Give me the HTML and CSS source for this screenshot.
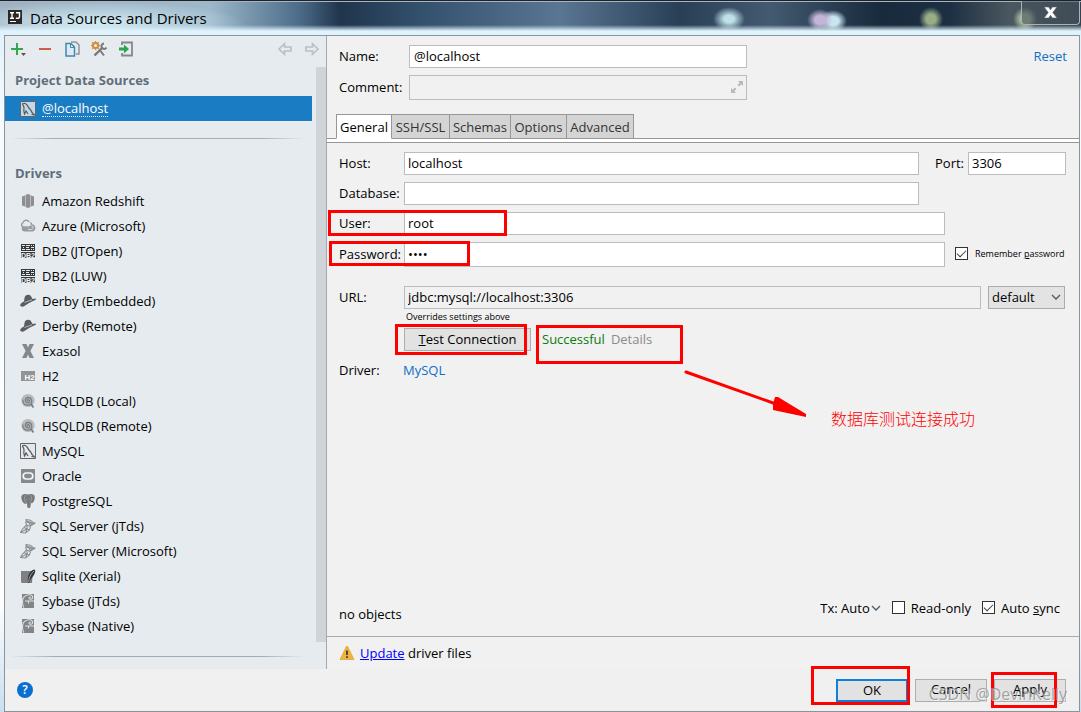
FILE: index.html
```html
<!DOCTYPE html>
<html lang="en">
<head>
<meta charset="utf-8">
<title>Data Sources and Drivers</title>
<link rel="stylesheet" href="styles.css">
</head>
<body>
<svg class="sprite" aria-hidden="true">
  <symbol id="redshift" viewBox="0 0 16 16"><path fill="#8d8f91" d="M2 3.500l3-1v11l-3-1zM14 3.500l-3-1v11l3-1zM5.500 2l2.500-1 2.500 1v12L8 15l-2.500-1z"/></symbol>
  <symbol id="azure" viewBox="0 0 16 16"><path fill="#989a9c" d="M5 13.500a3 3 0 0 1-.5-6 4 4 0 0 1 7.500-1.200 3.700 3.700 0 0 1 .8 7.200z"/><path fill="#e6ebf0" d="M1.500 8.500a2.500 2.500 0 0 1 1.700-4.300A3.200 3.200 0 0 1 9 4a2.600 2.600 0 0 1 2.500 2.700L9 10z"/><path fill="none" stroke="#989a9c" stroke-width="1.500" d="M3.500 9A2.300 2.300 0 0 1 3 4.600 3.200 3.200 0 0 1 9 4M3.500 9h5.500a2.500 2.500 0 0 0 1.500-4.500"/><path fill="none" stroke="#d5dade" d="M8 11.500h3a2 2 0 0 0 0-4"/></symbol>
  <symbol id="db2" viewBox="0 0 16 16"><path fill="#36383a" d="M1 1h14v14H1z"/><path fill="none" stroke="#e6eaed" d="M2 2.500h3M6 2.500h4M11 2.500h1M13 2.500h1M3 4.500h1M6 4.500h3M11 4.500h3M2 6.500h3M6 6.500h4M11 6.500h1M13 6.500h1"/><path fill="#e6ebef" d="M1 8h14v1H1z"/><text x="8" y="14.500" class="tiny" font-size="7" text-anchor="middle" fill="#f0f3f5">DB2</text></symbol>
  <symbol id="derby" viewBox="0 0 16 16"><path fill="#5b5d5f" d="M4 8.500L4.500 5C5 1.600 9 .8 10.700 2.800L12.500 6l3-.6c.8.300.5 1.200-.2 1.600L10 9.500c-2 1-3.500 2.200-5.600 3.600-1.500 1-3.800.6-4.200-.6-.3-1.300 1.500-2.800 3.800-4z"/><path stroke="#c7cdd2" stroke-width=".8" d="M4.500 9.500L12 6.800"/></symbol>
  <symbol id="exasol" viewBox="0 0 16 16"><path fill="#858789" d="M2 1h4.500L8 4.600 9.500 1H14l-3.600 7L14 15H9.500L8 11.500 6.500 15H2l3.600-7z"/></symbol>
  <symbol id="h2" viewBox="0 0 16 16"><path fill="#919395" d="M1 3h14v10H1z"/><text x="9.500" y="11.500" class="tiny" font-size="8" text-anchor="middle" fill="#fff">H2</text></symbol>
  <symbol id="hsql" viewBox="0 0 16 16"><circle cx="8" cy="7.500" r="6.600" fill="#b8bbbe"/><path fill="none" stroke="#7d7f81" stroke-width="1.300" d="M8 8.300c-1.400-.3-.8-2 .4-1.700 2 .5 1.500 3.300-.5 3.300C4.500 10 4.500 4.700 8 4.500c4.500-.3 5 6.500 1 7.500-4 1-7-2-6-5.500"/><path stroke="#7d7f81" stroke-width="1.800" d="M11 11l2.500 3.500"/></symbol>
  <symbol id="mysql" viewBox="0 0 16 16"><path fill="#e3e8ed" fill-opacity=".85" stroke="#626466" d="M.5.5h15v15H.5z"/><path fill="none" stroke="#55585b" stroke-width="1.200" d="M2.500 2.500c2.500-.8 4.500.8 5.500 3s2.500 2.500 3.500 5c.3 1.200 1.500 1.500 3 3.500l-3-.5M2.500 2.500c0 2 1.700 2.500 1.500 4.500-.4 2-.3 4 .5 6l1.500-3 2 3"/></symbol>
  <symbol id="oracle" viewBox="0 0 16 16"><path fill="#88898b" d="M1 1h14v14H1z"/><rect x="3.200" y="5" width="9.600" height="6" rx="3" fill="#88898b" stroke="#f4f5f6" stroke-width="1.700"/></symbol>
  <symbol id="postgres" viewBox="0 0 16 16"><path fill="#77797b" d="M3 1.500c2-.8 3.500-.3 5 .1 2-.8 4.500-.8 6 .5 1.600 1.500.6 5.800-1.400 7.900l-1.800.3-.3 3.200c-.3 2-2.800 2-3.200.3l-.3-3.200-2.500.2C2 9.500-.5 3 3 1.500z"/><path fill="none" stroke="#a5a9ac" stroke-width=".7" d="M5.500 2C4 4 4.500 6 5 8.500l2 1.500M10.500 2c1.700 2 1 4 .5 6.500L9.800 10M7 6v1M9.500 5.500v1"/></symbol>
  <symbol id="mssql" viewBox="0 0 16 16"><path fill="none" stroke="#8e9194" stroke-width="1.100" d="M5.500 1.500c1 2 4 3 10 3.500M5.500 1.500l4 .5 3 1.500M15.500 5c-3 1-6 .7-10-1.500M5.500 3.500l1 3.500 4 1.500M15 5.200L10.500 8l-2-4M6.500 7C4 9.500 2 11 .5 14.500l5 .5 4-3 1-3.500M.8 14.300l6-3.300-2.500-1.500M9.500 12L7 11l-1.500 4M6.500 7l1 4M12.500 3.500l-1.500 4"/></symbol>
  <symbol id="sqlite" viewBox="0 0 16 16"><path fill="#7e8082" d="M1 3h12l-1 12H2l-1-1z"/><path fill="#35373a" d="M8 15c-1-6 1-12 6-13.500 1.500 0 1.500 2 .7 4C13.500 8.500 11 10 9 15z"/><path stroke="#aeb2b5" stroke-width=".8" fill="none" d="M8.500 14c.5-4 2-8 5.500-11"/></symbol>
  <symbol id="sybase" viewBox="0 0 16 16"><path fill="#828486" d="M2 1h12v14H2z"/><path fill="none" stroke="#dde1e5" stroke-width="1.100" d="M5 8h9M2.500 9C2 5 5 2 9 1.800c3-.2 4.500 2 3.500 3.500S8.500 6.300 9 5s2-.8 1.700-.2M8.500 8v2.500M2.500 8c0 2 0 5 1.500 6.500"/></symbol>
  <symbol id="chevron" viewBox="0 0 10 10"><path fill="none" stroke="#55585a" stroke-width="1.300" d="M1 3l4 4 4-4"/></symbol>
</svg>

<header class="titlebar">
  <svg class="logo" viewBox="0 0 16 16" aria-hidden="true"><path fill="#2b2829" d="M1 1h14v14H1z"/><path fill="none" stroke="#fff" stroke-width="1.400" d="M3 3.700h4M5 3.700V9M3 9.200h4M9 3.700h3.500v4c0 1.700-2 2-3.500 1.200"/><path stroke="#fff" d="M3 12.500h6"/></svg>
  <h1>Data Sources and Drivers</h1>
  <button class="close" aria-label="Close"><svg viewBox="0 0 16 14"><path fill="#fff" stroke="#53606b" stroke-width=".7" d="M1 1h5l2 3 2-3h5l-4.500 6 4.500 6h-5l-2-3-2 3H1l4.500-6z"/></svg></button>
</header>

<main class="dialog">
  <div class="content">
    <aside class="sidebar">
      <div class="toolbar">
        <button aria-label="Add"><svg viewBox="0 0 16 16"><path stroke="#35a84d" stroke-width="2" d="M7 2v12M1 8h12"/><path fill="#555" d="M11 12h5l-2.500 3z"/></svg></button>
        <button aria-label="Remove"><svg viewBox="0 0 16 16"><path stroke="#c75f4b" stroke-width="2" d="M2 8h12"/></svg></button>
        <button aria-label="Copy"><svg viewBox="0 0 16 16"><path fill="none" stroke="#929496" stroke-width="1.500" d="M7 1h5l3 3v9h-3"/><path fill="#dcecf5" stroke="#4488b0" stroke-width="1.500" d="M2 2.500h5L10.500 6v9H2z"/><path fill="none" stroke="#4488b0" d="M6.500 3v3.500H10"/></svg></button>
        <button aria-label="Settings"><svg viewBox="0 0 16 16"><path stroke="#77797b" stroke-width="2.400" d="M3.500 14.500l7-7"/><path fill="none" stroke="#77797b" stroke-width="2" d="M13 2.500a2.700 2.700 0 1 0 2.500 4M9.500 10l3.500 4.500"/><circle cx="4.500" cy="4.500" r="2.600" fill="#e6ebf0" stroke="#d08f3c" stroke-width="2"/><path stroke="#d08f3c" stroke-width="1.300" d="M4.500 0v2M4.500 7v2M0 4.500h2M7 4.500h2M1.300 1.300l1.500 1.500M6.300 6.300l1.500 1.500M7.700 1.300L6.300 2.700M1.300 7.700l1.500-1.500"/></svg></button>
        <button aria-label="Import"><svg viewBox="0 0 16 16"><path fill="none" stroke="#858789" stroke-width="1.800" d="M4 4V1.500h10v13H4V12"/><path fill="#2da44e" d="M1 6.500h5V3.500L11 8l-5 4.500v-3H1z"/></svg></button>
        <span class="spacer"></span>
        <button aria-label="Back"><svg viewBox="0 0 16 16"><path fill="none" stroke="#bbc0c4" stroke-width="1.700" d="M2 8l5.500-5.300V6H14v4H7.500v3.300z"/></svg></button>
        <button aria-label="Forward"><svg viewBox="0 0 16 16"><path fill="none" stroke="#bbc0c4" stroke-width="1.700" d="M14 8L8.500 2.700V6H2v4h6.500v3.300z"/></svg></button>
      </div>
      <div class="tree">
        <div class="tree-body">
          <h2 class="first">Project Data Sources</h2>
          <ul><li class="selected"><svg><use href="#mysql"/></svg><span>@localhost</span></li></ul>
          <hr class="upper">
          <h2>Drivers</h2>
          <ul>
            <li><svg><use href="#redshift"/></svg>Amazon Redshift</li>
            <li><svg><use href="#azure"/></svg>Azure (Microsoft)</li>
            <li><svg><use href="#db2"/></svg>DB2 (JTOpen)</li>
            <li><svg><use href="#db2"/></svg>DB2 (LUW)</li>
            <li><svg><use href="#derby"/></svg>Derby (Embedded)</li>
            <li><svg><use href="#derby"/></svg>Derby (Remote)</li>
            <li><svg><use href="#exasol"/></svg>Exasol</li>
            <li><svg><use href="#h2"/></svg>H2</li>
            <li><svg><use href="#hsql"/></svg>HSQLDB (Local)</li>
            <li><svg><use href="#hsql"/></svg>HSQLDB (Remote)</li>
            <li><svg><use href="#mysql"/></svg>MySQL</li>
            <li><svg><use href="#oracle"/></svg>Oracle</li>
            <li><svg><use href="#postgres"/></svg>PostgreSQL</li>
            <li><svg><use href="#mssql"/></svg>SQL Server (jTds)</li>
            <li><svg><use href="#mssql"/></svg>SQL Server (Microsoft)</li>
            <li><svg><use href="#sqlite"/></svg>Sqlite (Xerial)</li>
            <li><svg><use href="#sybase"/></svg>Sybase (jTds)</li>
            <li><svg><use href="#sybase"/></svg>Sybase (Native)</li>
          </ul>
          <hr class="lower">
        </div>
        <div class="scrollbar"></div>
      </div>
    </aside>

    <section class="details">
      <div class="identity">
        <div class="row name"><label for="name">Name:</label><input id="name" value="@localhost"><a class="link reset" href="#">Reset</a></div>
        <div class="row name"><label for="comment">Comment:</label><span class="expandable"><input id="comment" class="readonly"><svg viewBox="0 0 12 12" aria-hidden="true"><path fill="#b4b9bd" d="M7 0h5v5l-1.700-1.700-2.300 2.300-1.500-1.500 2.300-2.300zM0 7v5h5l-1.700-1.700 2.200-2.200L4 6.600 1.700 8.800z"/></svg></span></div>
      </div>
      <div class="tabs" role="tablist">
        <button role="tab" aria-selected="true">General</button><button role="tab">SSH/SSL</button><button role="tab">Schemas</button><button role="tab">Options</button><button role="tab">Advanced</button>
      </div>

      <div class="form">
        <div class="row"><label for="host">Host:</label><input id="host" value="localhost"><div class="side port"><label for="port">Port:</label><input id="port" value="3306"></div></div>
        <div class="row"><label for="database">Database:</label><input id="database"><div class="side"></div></div>
        <div class="row"><label for="user">User:</label><input id="user" value="root"><div class="side narrow"></div><i class="mark mark-user"></i></div>
        <div class="row tall"><label for="password">Password:</label><input id="password" type="password" value="root"><div class="side narrow"><label class="check small"><input type="checkbox" checked><span>Remember <u>p</u>assword</span></label></div><i class="mark mark-password"></i></div>
        <div class="row url"><label for="url">URL:</label><input id="url" class="readonly" value="jdbc:mysql://localhost:3306"><span class="select"><select aria-label="URL type"><option>default</option></select><svg><use href="#chevron"/></svg></span></div>
        <p class="hint">Overrides settings above</p>
        <div class="row test">
          <button class="button"><span><u>T</u>est Connection</span></button>
          <span class="success">Successful</span><a class="muted" href="#">Details</a>
          <i class="mark mark-test"></i><i class="mark mark-result"></i>
          <svg class="arrow" viewBox="0 0 124 48" aria-hidden="true"><path stroke="#f00" stroke-width="3" stroke-linecap="round" d="M2 2l90 32"/><path fill="#f00" d="M91 27h3l28 17v3l-33-7v-6z"/></svg>
          <span class="note" lang="zh">数据库测试连接成功</span>
        </div>
        <div class="row driver"><span class="label">Driver:</span><a class="link" href="#">MySQL</a></div>
      </div>

      <div class="status">
        <span class="objects">no objects</span>
        <button class="tx">Tx: Auto<svg><use href="#chevron"/></svg></button>
        <label class="check"><input type="checkbox"><span>Read-only</span></label>
        <label class="check"><input type="checkbox" checked><span>Auto <u>s</u>ync</span></label>
      </div>
      <div class="update"><svg viewBox="0 0 16 16" aria-hidden="true"><path fill="#f2b33d" stroke="#d99b2b" stroke-width=".6" d="M7.300 1.500h1.400L15 14.500H1z"/><path stroke="#4e4a43" stroke-width="2" d="M8 5.500V10M8 11.200v1.800"/></svg><p><a href="#">Update</a> driver files</p></div>
    </section>
  </div>

  <footer class="footer">
    <button class="help" aria-label="Help">?</button>
    <span class="spacer"></span>
    <span class="action"><button class="button default">OK</button><i class="mark mark-ok"></i></span>
    <span class="action"><button class="button">Cancel</button></span>
    <span class="action"><button class="button"><span><u>A</u>pply</span></button><i class="mark mark-apply"></i></span>
    <span class="watermark">CSDN @DevinKelly</span>
  </footer>
</main>
</body>
</html>
```

FILE: styles.css
```css
* { box-sizing: border-box; }

body {
  margin: 0;
  min-height: 100vh;
  display: flex;
  flex-direction: column;
  padding: 0 1px 0 4px;
  background: linear-gradient(#d8effb, #f6fbfe 120px, #fff 600px, #c9dff0);
  color: #000;
  font: 13px/18px "Open Sans", "Noto Sans", "Noto Sans CJK SC", sans-serif;
}

h1, h2, p, ul { margin: 0; padding: 0; font-weight: 400; }
button, input, select { font: inherit; color: inherit; }
button { padding: 0; border: 0; background: none; }
svg { display: block; flex: none; width: 16px; height: 16px; }
.sprite { display: none; }
.tiny { font-family: "Liberation Sans", sans-serif; font-weight: 700; }
.spacer { flex: 1; }

/* Title bar */
.titlebar {
  display: flex;
  align-items: flex-start;
  height: 35px;
  margin: 0 -1px 0 -4px;
  padding-left: 7px;
  border-top: 1px solid #1a222c;
  box-shadow: inset 0 1px #a9b6c2;
  background:
    linear-gradient(transparent 24px, #dff3fd 30px),
    radial-gradient(ellipse 16px 12px at 729px 18px, #bfe0e8 30%, transparent),
    radial-gradient(ellipse 13px 11px at 820px 19px, #c4b4d8 40%, transparent),
    radial-gradient(ellipse 14px 11px at 833px 20px, #c9e6f0 40%, transparent),
    radial-gradient(ellipse 12px 12px at 931px 18px, #98ad86 40%, transparent),
    radial-gradient(ellipse 12px 12px at 1025px 18px, #a7b99a 40%, transparent),
    radial-gradient(ellipse 150px 22px at 95px 22px, #d2edf5, transparent),
    linear-gradient(90deg, #9fb1c1 0, #9db8ca 210px, #4c6b89 300px, #20354c 340px, #33506c 420px, #5b7692 560px, #283f56 680px, #435a70 770px, #182a3c 880px, #1d2f42 950px, #4b5861 1010px, #35424e);
}
.logo { margin-top: 8px; }
.titlebar h1 { flex: 1; margin: 6px 0 0 7px; font-size: 15px; line-height: 22px; }
.close {
  display: grid;
  place-items: center;
  width: 59px;
  height: 24px;
  margin-right: 1px;
  border: 1px solid #a9b3ba;
  border-top: 0;
  border-radius: 0 0 4px 4px;
  background: #46535e99;
}
.close svg { width: 15px; height: 13px; }

/* Dialog frame */
.dialog {
  flex: 1;
  display: flex;
  flex-direction: column;
  border: 1px solid #8d9396;
  background: #f0f0f0;
}
.content { flex: 1; display: flex; }

/* Sidebar */
.sidebar {
  width: 322px;
  display: flex;
  flex-direction: column;
  border-right: 1px solid #a5a8aa;
  background: #e6ebef;
}
.toolbar { display: flex; gap: 11px; height: 31px; padding: 5px 6px 0 5px; align-items: flex-start; }
.tree { flex: 1; display: flex; align-items: flex-start; gap: 4px; }
.tree-body { flex: 1; }
.scrollbar { width: 10px; height: 575px; background: #cfd4d8; }
.sidebar h2 { padding: 0 10px; color: #5f6e7b; font-size: 13px; line-height: 18px; font-weight: 700; }
.sidebar h2.first { padding-top: 4px; padding-bottom: 7px; }
.sidebar ul { list-style: none; }
.sidebar li { display: flex; align-items: center; gap: 6px; height: 25px; padding: 0 0 2px 15px; }
.sidebar li.selected { background: #1a7dc4; color: #fff; padding-bottom: 0; }
.selected span { line-height: 16px; border-bottom: 1px dotted #d8e9f5; }
.sidebar hr { height: 1px; border: 0; margin: 0 7px 0 5px; background: linear-gradient(90deg, transparent, #a9acaf 15%, #a9acaf 85%, transparent); }
.sidebar hr.upper { margin-top: 17px; margin-bottom: 25px; }
.sidebar h2 + ul { margin-top: 7px; }
.sidebar h2.first + ul { margin-top: 0; }
.sidebar hr.lower { margin-top: 17px; }

/* Right pane */
.details { flex: 1; display: flex; flex-direction: column; background: #f1f1f1; }
.link { color: #0f6fc6; text-decoration: none; }
.row { position: relative; display: flex; align-items: center; min-height: 23px; }
.row > label, .label { width: 65px; padding-bottom: 2px; white-space: nowrap; }
.row input:not([type="checkbox"]) {
  flex: 1;
  min-width: 0;
  height: 23px;
  padding: 0 3px 2px;
  border: 1px solid #babcbd;
  border-radius: 0;
  background: #fff;
  outline: 0;
}
.row input.readonly:not([type="checkbox"]) { background: #f1f1f1; }

.identity { display: flex; flex-direction: column; gap: 7px; padding: 9px 12px 14px; }
.name > label { width: 70px; }
.name > input:not([type="checkbox"]), .expandable { flex: 0 1 338px; }
.name input:not([type="checkbox"]) { padding: 0 4px 2px; }
.expandable { position: relative; display: flex; }
.expandable input.readonly:not([type="checkbox"]) { height: 25px; }
.expandable svg { position: absolute; right: 4px; top: 6px; width: 12px; height: 12px; }
.reset { margin-left: auto; padding-bottom: 1px; }

.tabs {
  display: grid;
  grid-template-columns: 56px 58px 61px 56px 67px;
  height: 29px;
  padding-left: 9px;
  border-bottom: 1px solid #959798;
  background: linear-gradient(#f1f1f1 24px, #959798 24px, #959798 25px, #fff 25px);
}
.tabs button {
  height: 25px;
  padding: 0;
  border: 1px solid #959798;
  border-left: 0;
  background: #d4d4d4;
  color: #333;
}
.tabs button:first-child { border-left: 1px solid #959798; border-bottom-color: #fff; background: #fff; color: #000; }

.form { flex: 1; padding: 9px 13px 0 12px; }
.form .row + .row { margin-top: 7px; }
.side { width: 147px; display: flex; align-items: center; }
.side.narrow { width: 121px; padding-left: 10px; }
.port { padding-left: 16px; }
.port > label { width: 33px; padding-bottom: 2px; }
.row.tall > input:not([type="checkbox"]) { height: 25px; }
.form .row.url { margin-top: 19px; }
.select { position: relative; width: 77px; margin: 0 1px 0 7px; }
.select select {
  width: 100%;
  height: 23px;
  padding: 0 3px 1px;
  border: 1px solid #a9abac;
  border-radius: 0;
  background: #e3e3e3;
  appearance: none;
  display: block;
}
.select svg { position: absolute; right: 4px; top: 6px; width: 10px; height: 10px; }
.hint { padding: 1px 0 4px 67px; font-size: 9px; line-height: 14px; }
.form .test { padding-left: 65px; }
.button { width: 72px; height: 23px; padding-bottom: 2px; border: 1px solid #acaeaf; background: #e2e2e2; }
.test .button { width: 127px; }
.success { margin-left: 11px; padding-bottom: 2px; color: #0a7a0a; }
.muted { margin-left: 6px; padding-bottom: 2px; color: #8a8a8a; text-decoration: none; }
.form .row.driver { margin-top: 8px; }
.driver .label { width: 64px; }
.driver .link { padding-bottom: 2px; }

.check { display: flex; align-items: center; gap: 6px; white-space: nowrap; }
.check input {
  appearance: none;
  display: grid;
  place-items: center;
  width: 13px;
  height: 13px;
  margin: 0;
  border: 1px solid #333;
  background: #fff;
}
.check input:checked::after {
  content: "";
  width: 8px;
  height: 4px;
  margin-bottom: 3px;
  border: solid #444;
  border-width: 0 0 1px 1px;
  transform: rotate(-45deg);
}
.check.small { gap: 7px; padding-bottom: 2px; font-size: 9px; }

.status { display: flex; align-items: center; gap: 11px; height: 46px; padding: 0 19px 11px 12px; }
.objects { flex: 1; padding-top: 13px; }
.tx { display: flex; align-items: center; gap: 1px; }
.tx svg { width: 10px; height: 10px; }
.update { display: flex; align-items: center; gap: 5px; height: 33px; padding-left: 12px; border-top: 1px solid #a9abac; }
.update a { color: #00f; }

/* Footer */
.footer { position: relative; display: flex; align-items: center; gap: 7px; height: 42px; padding: 0 13px 0 12px; }
.help { width: 16px; height: 16px; border-radius: 50%; background: #0a6fd0; color: #fff; font-size: 12px; line-height: 16px; font-weight: 600; }
.action { position: relative; display: flex; }
.button.default { border: 2px solid #0d80dc; }

/* Red call-outs drawn over the controls */
.mark { position: absolute; border: 3px solid #f00; pointer-events: none; }
.mark-user { left: -11px; top: -2px; width: 179px; height: 26px; }
.mark-password { left: -10px; top: -1px; width: 141px; height: 25px; }
.mark-test { left: 56px; top: -4px; width: 132px; height: 31px; }
.mark-result { left: 197px; top: -3px; width: 147px; height: 39px; }
.arrow { position: absolute; left: 345px; top: 42px; width: 124px; height: 48px; }
.note { position: absolute; left: 492px; top: 78px; color: #f00; font: 300 16px/24px "Noto Sans CJK SC", sans-serif; white-space: nowrap; }
.mark-ok { left: -25px; top: -13px; width: 99px; height: 39px; }
.mark-apply { left: -3px; top: -7px; width: 66px; height: 36px; }
.watermark {
  position: absolute;
  right: 12px;
  bottom: 6px;
  color: #8f8f8fcc;
  font-size: 16px;
  line-height: 22px;
  text-shadow: 1px 1px #ffffff99;
  pointer-events: none;
}
```
